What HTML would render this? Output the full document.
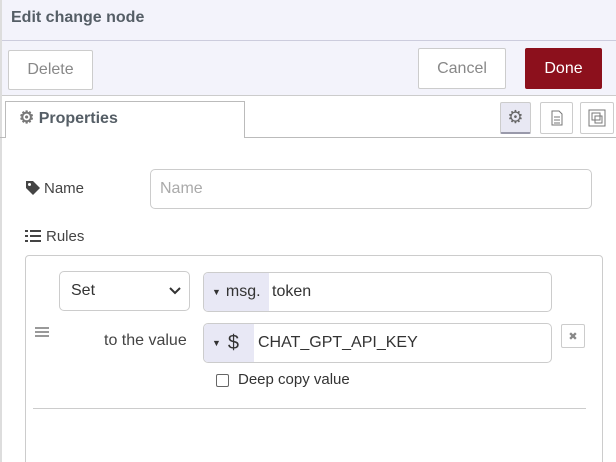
<!DOCTYPE html><html><head><style>
*{box-sizing:border-box;margin:0;padding:0}
html,body{width:616px;height:462px;overflow:hidden}
body{background:#fff;font-family:"Liberation Sans",sans-serif;position:relative;color:#555}
.a{position:absolute}
.btn{position:absolute;border:1px solid #ccc;background:#fff;color:#888;font-size:16px;display:flex;align-items:center;justify-content:center;border-radius:2px}
.inp{position:absolute;border:1px solid #ccc;border-radius:5px;background:#fff;font-size:16px;color:#333;display:flex;align-items:center;overflow:hidden}
.ib{position:absolute;border:1px solid #ccc;background:#fff;border-radius:2px;display:flex;align-items:center;justify-content:center}
</style></head><body>
<div class="a" style="left:0;top:0;width:616px;height:96px;background:#f3f3fb;border-bottom:1px solid #ccc"></div>
<div class="a" style="left:0;top:40px;width:616px;height:1px;background:#ccd"></div>
<div class="a" style="left:0;top:0;width:2px;height:462px;background:#ddd"></div>
<div class="a" style="left:11px;top:9px;font-size:16px;font-weight:bold;color:#555e66">Edit change node</div>
<div class="btn" style="left:8px;top:50px;width:85px;height:40px">Delete</div>
<div class="btn" style="left:418px;top:48px;width:88px;height:41px">Cancel</div>
<div class="btn" style="left:525px;top:48px;width:77px;height:41px;background:#8c101c;border-color:#8c101c;color:#fff">Done</div>
<div class="a" style="left:0;top:137px;width:616px;height:1px;background:#bbb"></div>
<div class="a" style="left:5px;top:101px;width:240px;height:37px;border:1px solid #bbb;border-bottom:none;background:#fff"></div>
<div class="a" style="left:19px;top:108px;font-size:16px;font-weight:bold;color:#555e66"><span style="color:#777;font-size:17px">⚙</span> Properties</div>
<div class="ib" style="left:500px;top:102px;width:31px;height:32px;background:#e8e8f3;border-bottom:2px solid #99a;color:#666;font-size:18px">⚙</div>
<div class="ib" style="left:540px;top:102px;width:33px;height:32px"><svg width="12" height="16"><path d="M1 1h7l3 3v11H1z M3 7h6M3 10h6M3 13h6" fill="none" stroke="#777"/></svg></div>
<div class="ib" style="left:580px;top:102px;width:34px;height:32px"><svg width="20" height="20"><rect x="2" y="2" width="16" height="16" fill="none" stroke="#777"/><rect x="5" y="5" width="8" height="7" fill="none" stroke="#777"/><rect x="8" y="8" width="7" height="7" fill="none" stroke="#777"/></svg></div>
<svg class="a" style="left:25px;top:180px" width="16" height="16"><path d="M1 1h7l7 7-7 7-7-7z" fill="#444"/><circle cx="4.5" cy="4.5" r="1.5" fill="#fff"/></svg>
<div class="a" style="left:44px;top:180px;font-size:15px;color:#444">Name</div>
<div class="inp" style="left:150px;top:169px;width:442px;height:40px;padding-left:9px;color:#aaa">Name</div>
<svg class="a" style="left:25px;top:229px" width="16" height="14"><path d="M0 1h3v2H0zM5 1h11v2H5zM0 6h3v2H0zM5 6h11v2H5zM0 11h3v2H0zM5 11h11v2H5z" fill="#444"/></svg>
<div class="a" style="left:46px;top:228px;font-size:15px;color:#444">Rules</div>
<div class="a" style="left:25px;top:255px;width:578px;height:215px;border:1px solid #ccc;border-radius:4px"></div>
<div class="inp" style="left:59px;top:271px;width:131px;height:40px;padding-left:11px">Set<svg style="position:absolute;right:8px;top:15px" width="12" height="8"><path d="M1 1l5 5 5-5" fill="none" stroke="#333" stroke-width="2"/></svg></div>
<div class="inp" style="left:203px;top:272px;width:349px;height:40px"><div style="width:65px;height:100%;background:#e8e8f5;display:flex;align-items:center;padding-left:8px;font-size:16px"><span style="font-size:9px;margin-right:5px">▼</span>msg.</div><span style="margin-left:3px">token</span></div>
<div class="a" style="left:104px;top:332px;font-size:16px;color:#444">to the value</div>
<div class="inp" style="left:203px;top:323px;width:349px;height:40px"><div style="width:50px;height:100%;background:#e8e8f5;display:flex;align-items:center;padding-left:8px;font-size:20px"><span style="font-size:9px;margin-right:7px">▼</span>$</div><span style="margin-left:4px">CHAT_GPT_API_KEY</span></div>
<div class="ib" style="left:561px;top:324px;width:24px;height:24px;font-size:11px;color:#888">✖</div>
<div class="a" style="left:35px;top:327px;width:14px;height:2px;background:#999;box-shadow:0 4px #999,0 8px #999"></div>
<div class="a" style="left:216px;top:374px;width:13px;height:13px;border:1px solid #666;border-radius:2px"></div>
<div class="a" style="left:238px;top:371px;font-size:15px;color:#333">Deep copy value</div>
<div class="a" style="left:33px;top:408px;width:553px;height:1px;background:#ccc"></div>
</body></html>
